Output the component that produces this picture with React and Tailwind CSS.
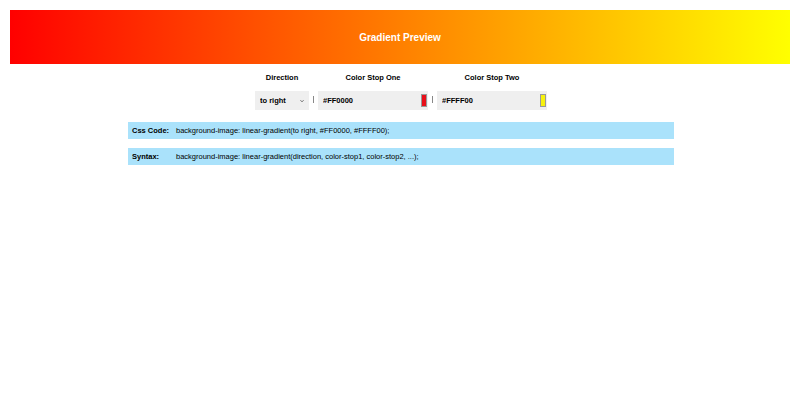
import React, { useState } from 'react';

const App = () => {
  const [direction, setDirection] = useState('to right');
  const [colorOne, setColorOne] = useState('#FF0000');
  const [colorTwo, setColorTwo] = useState('#FFFF00');

  const gradient = `linear-gradient(${direction}, ${colorOne}, ${colorTwo})`;

  return (
    <div className="w-[800px] h-[400px] bg-white font-['Liberation_Sans',Arial,sans-serif] text-black">
      <div className="px-[10px] pt-[10px]">
        {/* preview box */}
        <div
          className="h-[54px] flex items-center justify-center text-white font-bold text-[10px]"
          style={{ backgroundImage: gradient }}
        >
          Gradient Preview
        </div>
      </div>

      {/* controls */}
      <div className="flex justify-center mt-[9px] pl-[2px]">
        <div className="flex items-end">
          <div className="flex flex-col items-center w-[54px]">
            <span className="text-[7.5px] font-bold leading-[10px]">Direction</span>
            <div className="relative mt-[8px] w-[54px] h-[19px]">
              <select
                value={direction}
                onChange={(e) => setDirection(e.target.value)}
                className="block appearance-none w-full h-full bg-[#efefef] text-[7.5px] font-bold pl-[5px] outline-none"
              >
                <option>to right</option>
                <option>to left</option>
                <option>to bottom</option>
                <option>to top</option>
              </select>
              <svg
                viewBox="0 0 8 8"
                className="absolute right-[5px] top-[8px] w-[4px] h-[4px] pointer-events-none"
              >
                <path d="M1 2.5 L4 5.5 L7 2.5" fill="none" stroke="#333" strokeWidth="1.5" />
              </svg>
            </div>
          </div>
          <span className="w-[1px] h-[7px] bg-[#888] mx-[4px] mb-[7px]" />
          <div className="flex flex-col items-center w-[110px]">
            <span className="text-[7.5px] font-bold leading-[10px]">Color Stop One</span>
            <div className="mt-[8px] w-[110px] h-[19px] bg-[#efefef] flex items-center pl-[5px] pr-[1px]">
              <input
                value={colorOne}
                onChange={(e) => setColorOne(e.target.value)}
                className="flex-1 min-w-0 bg-transparent text-[7.5px] font-bold outline-none"
              />
              <span className="w-[6px] h-[13px] bg-[#e8101a] border border-[#999]" />
            </div>
          </div>
          <span className="w-[1px] h-[7px] bg-[#888] mx-[4px] mb-[7px]" />
          <div className="flex flex-col items-center w-[110px]">
            <span className="text-[7.5px] font-bold leading-[10px]">Color Stop Two</span>
            <div className="mt-[8px] w-[110px] h-[19px] bg-[#efefef] flex items-center pl-[5px] pr-[1px]">
              <input
                value={colorTwo}
                onChange={(e) => setColorTwo(e.target.value)}
                className="flex-1 min-w-0 bg-transparent text-[7.5px] font-bold outline-none"
              />
              <span className="w-[6px] h-[13px] bg-[#f7f20e] border border-[#999]" />
            </div>
          </div>
        </div>
      </div>

      {/* code lines */}
      <div className="ml-[128px] w-[546px] mt-[12px] flex flex-col gap-[9px]">
        <div className="h-[17px] bg-[#aae2fb] flex items-center text-[7.5px] px-[4px]">
          <span className="w-[44px] font-bold">Css Code:</span>
          <span>background-image: {gradient};</span>
        </div>
        <div className="h-[17px] bg-[#aae2fb] flex items-center text-[7.5px] px-[4px]">
          <span className="w-[44px] font-bold">Syntax:</span>
          <span>background-image: linear-gradient(direction, color-stop1, color-stop2, ...);</span>
        </div>
      </div>
    </div>
  );
};

export default App;
